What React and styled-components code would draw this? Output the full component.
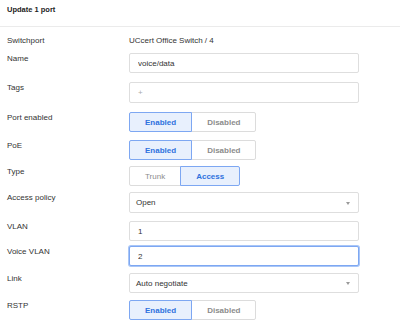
import { useState } from "react";
import styled, { createGlobalStyle } from "styled-components";

const GlobalStyle = createGlobalStyle`
	body {
		margin: 0;
		background: #ffffff;
		font-family: "Liberation Sans", Arial, sans-serif;
		color: #333333;
	}
`;

const Page = styled.div`
	width: 400px;
	height: 327px;
	overflow: hidden;
	background: #ffffff;
`;

const Header = styled.div`
	box-sizing: border-box;
	height: 27px;
	padding: 5px 7px 0;
	border-bottom: 1px solid #ebebeb;
	font-size: 7.5px;
	line-height: 10px;
	font-weight: bold;
	color: #222222;
`;

const Form = styled.div`
	display: flex;
	flex-direction: column;
	padding: 9px 7px 0;
`;

const Field = styled.div`
	display: grid;
	grid-template-columns: 122px 230px;
	margin-top: ${(p) => p.$gap || 0}px;
`;

const Label = styled.div`
	font-size: 8px;
	line-height: 10px;
	padding-top: ${(p) => (p.$plain ? 0 : 1)}px;
	color: #333333;
`;

const Value = styled.div`
	font-size: 8px;
	line-height: 10px;
	color: #333333;
`;

const TextInput = styled.input`
	box-sizing: border-box;
	width: 100%;
	height: ${(p) => p.$h || 20}px;
	margin: 0;
	padding: 0 8px;
	border: 1px solid ${(p) => (p.$focused ? "#7da7f2" : "#dedede")};
	box-shadow: ${(p) => (p.$focused ? "0 0 0 1px #a9c6f7" : "none")};
	border-radius: 2px;
	font-family: inherit;
	font-size: 8px;
	color: #333333;
	outline: none;
	background: #ffffff;

	&::placeholder {
		color: #aaaaaa;
	}
`;

const SelectBox = styled.div`
	box-sizing: border-box;
	position: relative;
	display: flex;
	align-items: center;
	height: ${(p) => p.$h || 21}px;
	padding: 0 6px;
	border: 1px solid #dedede;
	border-radius: 2px;
	font-size: 8px;
	color: #333333;
	background: #ffffff;

	&::after {
		content: "";
		position: absolute;
		right: 8px;
		top: 50%;
		margin-top: -1px;
		border-left: 2.5px solid transparent;
		border-right: 2.5px solid transparent;
		border-top: 3px solid #9a9a9a;
	}
`;

const Segmented = styled.div`
	display: flex;
	height: 20px;
`;

const SegButton = styled.button`
	box-sizing: border-box;
	position: relative;
	z-index: ${(p) => (p.$active ? 1 : 0)};
	height: 20px;
	margin: 0 0 0 -1px;
	padding: 0 15px;
	border: 1px solid ${(p) => (p.$active ? "#7da7f2" : "#dcdcdc")};
	background: ${(p) => (p.$active ? "#e8f0fd" : "#ffffff")};
	color: ${(p) => (p.$active ? "#2f72de" : "#8c8c8c")};
	font-family: inherit;
	font-size: 8px;
	font-weight: ${(p) => (p.$weak ? "normal" : "bold")};
	cursor: pointer;

	&:first-child {
		margin-left: 0;
		border-radius: 2px 0 0 2px;
	}

	&:last-child {
		border-radius: 0 2px 2px 0;
	}
`;

const Toggle = ({ options, value, onChange }) => (
	<Segmented>
		{options.map((opt) => (
			<SegButton
				key={opt}
				$active={value === opt}
				$weak={opt === "Trunk" && value !== opt}
				onClick={() => onChange(opt)}
			>
				{opt}
			</SegButton>
		))}
	</Segmented>
);

export default function App() {
	const [portEnabled, setPortEnabled] = useState("Enabled");
	const [poe, setPoe] = useState("Enabled");
	const [type, setType] = useState("Access");
	const [rstp, setRstp] = useState("Enabled");
	const [name, setName] = useState("voice/data");
	const [vlan, setVlan] = useState("1");
	const [voiceVlan, setVoiceVlan] = useState("2");

	return (
		<Page>
			<GlobalStyle />
			<Header>Update 1 port</Header>
			<Form>
				<Field>
					<Label $plain>Switchport</Label>
					<Value>UCcert Office Switch / 4</Value>
				</Field>

				<Field $gap={7}>
					<Label>Name</Label>
					<TextInput value={name} onChange={(e) => setName(e.target.value)} />
				</Field>

				<Field $gap={9}>
					<Label>Tags</Label>
					<TextInput $h={21} placeholder="+" />
				</Field>

				<Field $gap={9}>
					<Label>Port enabled</Label>
					<Toggle
						options={["Enabled", "Disabled"]}
						value={portEnabled}
						onChange={setPortEnabled}
					/>
				</Field>

				<Field $gap={8}>
					<Label>PoE</Label>
					<Toggle options={["Enabled", "Disabled"]} value={poe} onChange={setPoe} />
				</Field>

				<Field $gap={6}>
					<Label>Type</Label>
					<Toggle options={["Trunk", "Access"]} value={type} onChange={setType} />
				</Field>

				<Field $gap={6}>
					<Label>Access policy</Label>
					<SelectBox>Open</SelectBox>
				</Field>

				<Field $gap={8}>
					<Label>VLAN</Label>
					<TextInput value={vlan} onChange={(e) => setVlan(e.target.value)} />
				</Field>

				<Field $gap={5}>
					<Label>Voice VLAN</Label>
					<TextInput
						$focused
						value={voiceVlan}
						onChange={(e) => setVoiceVlan(e.target.value)}
					/>
				</Field>

				<Field $gap={7}>
					<Label>Link</Label>
					<SelectBox $h={20}>Auto negotiate</SelectBox>
				</Field>

				<Field $gap={7}>
					<Label>RSTP</Label>
					<Toggle options={["Enabled", "Disabled"]} value={rstp} onChange={setRstp} />
				</Field>
			</Form>
		</Page>
	);
}
